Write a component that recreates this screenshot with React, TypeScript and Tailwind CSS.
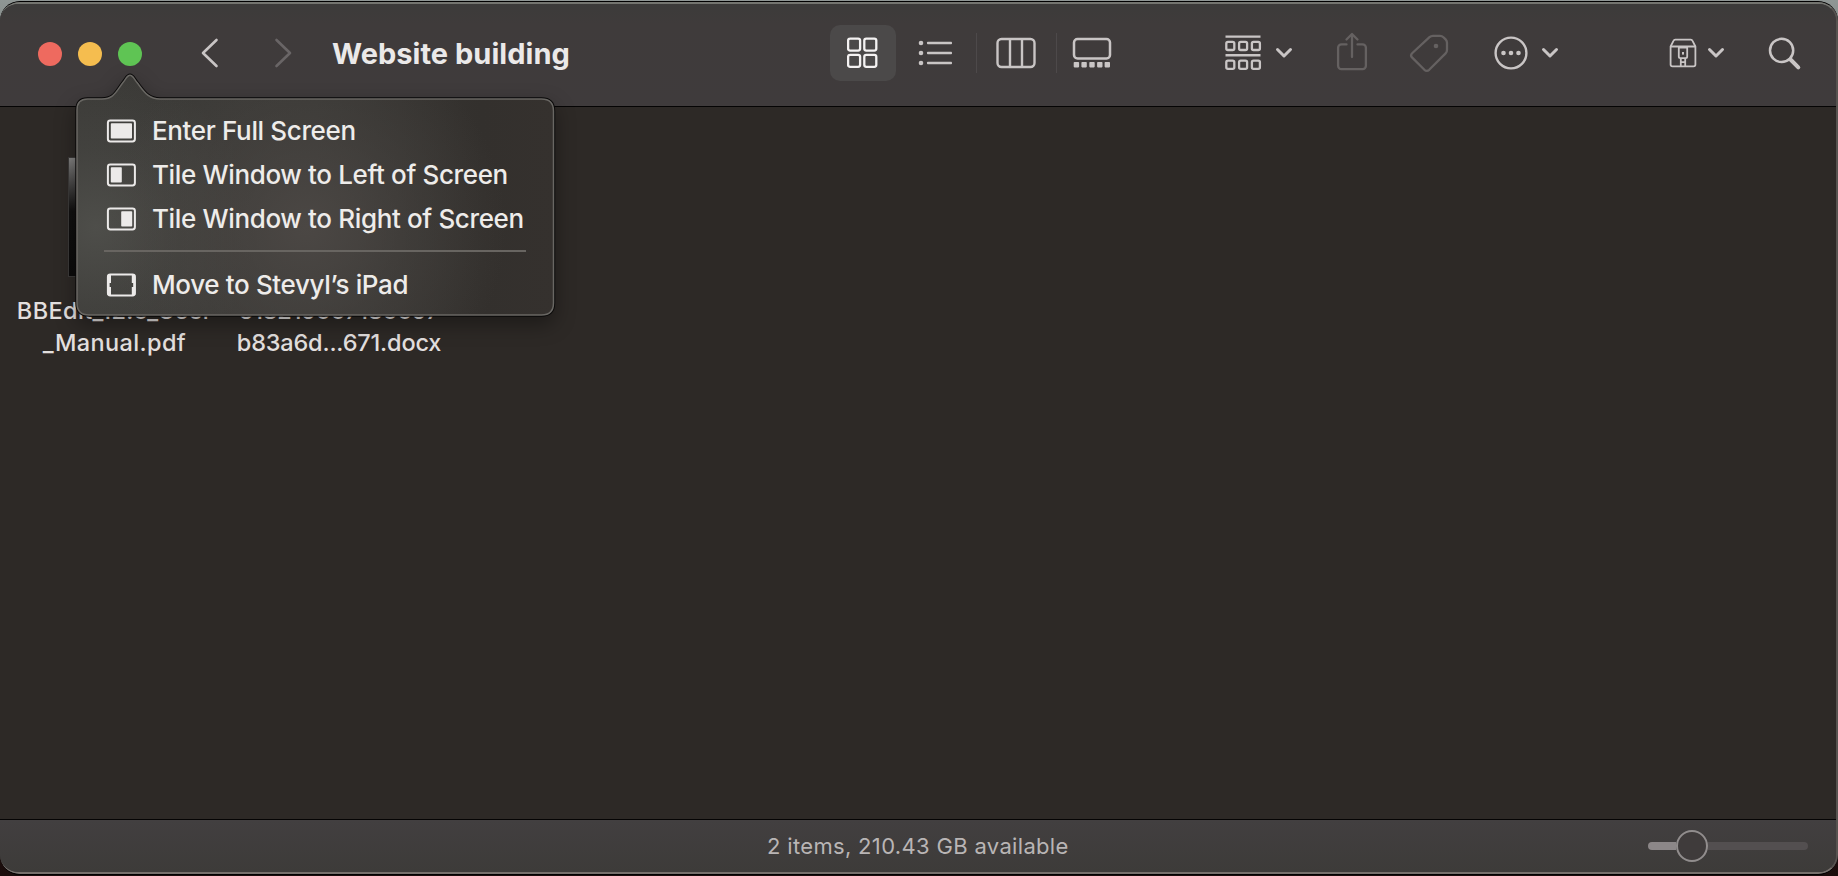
import type { ReactNode } from "react";

const tone = "#c9c5c5";

function Chevron() {
  return (
    <svg width="18" height="12" viewBox="0 0 18 12" fill="none" stroke={tone} strokeWidth="3" strokeLinecap="round" strokeLinejoin="round">
      <path d="M2.5 2.5 L9 9 L15.5 2.5" />
    </svg>
  );
}

function GridIcon() {
  return (
    <svg width="32" height="32" viewBox="0 0 32 32" fill="none" stroke="#f4f2f2" strokeWidth="2.3">
      <rect x="1.1" y="1.6" width="12" height="12" rx="2" />
      <rect x="17.3" y="1.6" width="12" height="12" rx="2" />
      <rect x="1.1" y="17.8" width="12" height="12" rx="2" />
      <rect x="17.3" y="17.8" width="12" height="12" rx="2" />
    </svg>
  );
}

function ListIcon() {
  return (
    <svg width="34" height="26" viewBox="0 0 34 26" fill={tone}>
      {[3, 13, 23].map((y) => (
        <g key={y}>
          <circle cx="3" cy={y} r="2.3" />
          <rect x="9" y={y - 1.3} width="25" height="2.6" rx="0.8" />
        </g>
      ))}
    </svg>
  );
}

function ColumnsIcon() {
  return (
    <svg width="40" height="32" viewBox="0 0 40 32" fill="none" stroke={tone} strokeWidth="2.4">
      <rect x="1.5" y="2" width="37" height="28" rx="4" />
      <path d="M14 2V30M26 2V30" />
    </svg>
  );
}

function GalleryIcon() {
  return (
    <svg width="40" height="32" viewBox="0 0 40 32">
      <rect x="2" y="2" width="36" height="19.5" rx="3.5" fill="none" stroke={tone} strokeWidth="2.5" />
      {[1.7, 9.4, 17.3, 25.1, 32.6].map((x) => (
        <rect key={x} x={x} y="25" width="5.4" height="5.4" rx="0.8" fill={tone} />
      ))}
    </svg>
  );
}

function GroupIcon() {
  return (
    <svg width="38" height="38" viewBox="0 0 38 38" fill="none" stroke={tone} strokeWidth="2.3">
      <path d="M1.5 2.6H36.5M1.5 21.2H36.5" strokeWidth="2.4" />
      {[2.3, 15.1, 27.9].map((x) => (
        <g key={x}>
          <rect x={x} y="7.8" width="8" height="8.2" rx="1.6" />
          <rect x={x} y="26.6" width="8" height="8.2" rx="1.6" />
        </g>
      ))}
    </svg>
  );
}

function ShareIcon() {
  return (
    <svg width="32" height="40" viewBox="0 0 32 40" fill="none" stroke="#656161" strokeWidth="2.3" strokeLinecap="round" strokeLinejoin="round">
      <path d="M10.5 12.4H5.5a3.4 3.4 0 0 0-3.4 3.4V33.8a3.4 3.4 0 0 0 3.4 3.4H26.5a3.4 3.4 0 0 0 3.4-3.4V15.8a3.4 3.4 0 0 0-3.4-3.4H21.5" />
      <path d="M16 25V3M10.5 7.5L16 2L21.5 7.5" />
    </svg>
  );
}

function TagIcon() {
  return (
    <svg width="40" height="40" viewBox="0 0 40 40" fill="none" stroke="#656161" strokeWidth="2.3" strokeLinejoin="round">
      <path d="M20.5 4.2Q22 2.8 24 2.8H31Q33 2.8 34.4 4.2L36.6 6.4Q38 7.8 38 9.8V17Q38 19 36.6 20.4L20.2 36.8Q17.8 39 15.4 36.8L3 24.4Q1 22.2 3.4 20Z" />
      <circle cx="27" cy="13" r="2.3" fill="#656161" stroke="none" />
    </svg>
  );
}

function MoreIcon() {
  return (
    <svg width="34" height="34" viewBox="0 0 34 34" fill={tone}>
      <circle cx="17" cy="17" r="15.4" fill="none" stroke={tone} strokeWidth="2.4" />
      <circle cx="9.5" cy="17" r="2.3" />
      <circle cx="17" cy="17" r="2.3" />
      <circle cx="24.5" cy="17" r="2.3" />
    </svg>
  );
}

function ArchiveIcon() {
  return (
    <svg width="28" height="30" viewBox="0 0 28 30" fill="none" stroke={tone} strokeWidth="1.8" strokeLinejoin="round">
      <path d="M1.6 8.5L4.6 2.6Q5 1.6 6.2 1.6H21.8Q23 1.6 23.4 2.6L26.4 8.5V26.5Q26.4 28.4 24.5 28.4H3.5Q1.6 28.4 1.6 26.5Z" />
      <path d="M1.6 8.5H26.4" />
      <path d="M9.8 9.6H18.2V18.6Q18.2 20.2 16.6 20.2H11.4Q9.8 20.2 9.8 18.6Z" />
      <rect x="13" y="14" width="2" height="2.6" fill={tone} stroke="none" />
      <path d="M11.8 20.5V28M16.2 20.5V28M11.8 24.2H16.2" />
    </svg>
  );
}

function SearchIcon() {
  return (
    <svg width="34" height="34" viewBox="0 0 34 34" fill="none" stroke={tone}>
      <circle cx="13.6" cy="13.4" r="11.6" strokeWidth="2.5" />
      <path d="M22.5 22.5L30.3 30.3" strokeWidth="4" strokeLinecap="round" />
    </svg>
  );
}

function ScreenIcon({ children }: { children: ReactNode }) {
  return (
    <svg width="30" height="24" viewBox="0 0 30 24" fill="#eceae9" className="shrink-0">
      <rect x="1.9" y="1.4" width="27" height="21" rx="2.4" fill="none" stroke="#eceae9" strokeWidth="2" />
      {children}
    </svg>
  );
}

function MenuItem({ icon, label }: { icon: ReactNode; label: string }) {
  return (
    <li className="flex h-11 items-center">
      {icon}
      <span className="ml-4 whitespace-nowrap text-[26px] font-[450] leading-8 tracking-[-0.36px]">{label}</span>
    </li>
  );
}

function ZoomMenu() {
  return (
    <div className="absolute left-[66px] top-[62px] h-[266px] w-[500px] text-[#eeecea]">
      <svg width="500" height="266" viewBox="0 0 500 266" className="absolute left-0 top-0 overflow-visible">
        <defs>
          <radialGradient id="glowLeft" gradientUnits="userSpaceOnUse" cx="30" cy="165" r="160">
            <stop offset="0" stopColor="#50504c" stopOpacity="0.9" />
            <stop offset="0.5" stopColor="#50504c" stopOpacity="0.35" />
            <stop offset="1" stopColor="#50504c" stopOpacity="0" />
          </radialGradient>
          <radialGradient id="glowMid" gradientUnits="userSpaceOnUse" cx="240" cy="165" r="200">
            <stop offset="0" stopColor="#4b4744" />
            <stop offset="0.5" stopColor="#4b4744" stopOpacity="0.45" />
            <stop offset="1" stopColor="#4b4744" stopOpacity="0" />
          </radialGradient>
          <linearGradient id="menuBase" x1="0" y1="0" x2="1" y2="0">
            <stop offset="0" stopColor="#3b3a37" />
            <stop offset="0.5" stopColor="#393835" />
            <stop offset="0.85" stopColor="#33302d" />
            <stop offset="1" stopColor="#35312e" />
          </linearGradient>
          <path id="menuShape" d="M21.5 37H36C48 37 50 29.5 57 20.5C60 17 61 13.3 64 13.3C67 13.3 68 17 71 20.5C78 29.5 82 37 94 37H475.5Q487.5 37 487.5 49V241Q487.5 253 475.5 253H23Q11 253 11 241V48Q11 37 21.5 37Z" />
        </defs>
        <use href="#menuShape" fill="#000" className="[filter:drop-shadow(0_8px_10px_rgba(0,0,0,0.35))]" stroke="#090808" strokeWidth="3.4" />
        <use href="#menuShape" fill="url(#menuBase)" />
        <use href="#menuShape" fill="url(#glowLeft)" />
        <use href="#menuShape" fill="url(#glowMid)" stroke="#696763" strokeWidth="1.5" />
      </svg>
      <ul className="relative flex flex-col pl-10 pt-[47px]">
        <MenuItem label="Enter Full Screen" icon={<ScreenIcon><rect x="4.8" y="4.3" width="21.2" height="15.2" rx="0.8" /></ScreenIcon>} />
        <MenuItem label="Tile Window to Left of Screen" icon={<ScreenIcon><rect x="4.8" y="4.3" width="11" height="15.2" rx="0.8" /></ScreenIcon>} />
        <MenuItem label="Tile Window to Right of Screen" icon={<ScreenIcon><rect x="15.2" y="4.3" width="11" height="15.2" rx="0.8" /></ScreenIcon>} />
        <li className="mb-[11px] ml-[-2px] mt-[9px] h-[2px] w-[422px] bg-[#686561]" />
        <MenuItem label="Move to Stevyl’s iPad" icon={<ScreenIcon><path d="M1.5 2H5V10H3.6V14H5V22H1.5ZM25.8 2H29.3V22H25.8V14H27.2V10H25.8Z" /></ScreenIcon>} />
      </ul>
    </div>
  );
}

function Toolbar() {
  return (
    <header className="flex h-[103px] shrink-0 items-start border-b border-[#050404] bg-linear-to-b from-[#3c3b3a] via-[#3f3b3b] via-20% to-[#3f3b3c] pt-[22px]">
      <div className="ml-[38px] mt-4 flex gap-4">
        <span className="size-6 rounded-full bg-[#ee6a5f]" />
        <span className="size-6 rounded-full bg-[#f5bd4f]" />
        <span className="size-6 rounded-full bg-[#5fc454]" />
      </div>
      <svg className="ml-[57px] mt-[11px]" width="20" height="32" viewBox="0 0 20 32" fill="none" stroke="#c9c5c5" strokeWidth="2.6" strokeLinecap="round" strokeLinejoin="round">
        <path d="M17.5 3L4 16L17.5 29" />
      </svg>
      <svg className="ml-[55px] mt-[11px]" width="20" height="32" viewBox="0 0 20 32" fill="none" stroke="#696566" strokeWidth="2.6" strokeLinecap="round" strokeLinejoin="round">
        <path d="M2.5 3L16 16L2.5 29" />
      </svg>
      <h1 className="ml-[38px] mt-[8px] w-[260px] whitespace-nowrap text-[29px] font-bold leading-10 tracking-[0.03px] text-[#ebe9e9]">Website building</h1>
      <div className="ml-[238px] flex h-[54px] items-center">
        <span className="flex h-14 w-[66px] items-center justify-center rounded-[10px] bg-[#4b4949]"><GridIcon /></span>
        <span className="ml-[22px]"><ListIcon /></span>
        <span className="ml-[24px] h-10 w-px bg-[#4d494a]" />
        <span className="ml-[19px]"><ColumnsIcon /></span>
        <span className="ml-[20px] h-10 w-px bg-[#4d494a]" />
        <span className="ml-[15px]"><GalleryIcon /></span>
      </div>
      <div className="ml-[112px] flex h-[54px] items-center">
        <GroupIcon />
        <span className="ml-[13px]"><Chevron /></span>
      </div>
      <div className="ml-[43px] mt-[6px]"><ShareIcon /></div>
      <div className="ml-[41px] mt-[7px]"><TagIcon /></div>
      <div className="ml-[45px] flex h-[54px] items-center">
        <MoreIcon />
        <span className="ml-[13px]"><Chevron /></span>
      </div>
      <div className="ml-[110px] flex h-[54px] items-center">
        <ArchiveIcon />
        <span className="ml-[10px]"><Chevron /></span>
      </div>
      <div className="ml-[43px] mt-[11px]"><SearchIcon /></div>
    </header>
  );
}

export default function App() {
  return (
    <div className="relative h-[876px] w-[1838px] overflow-hidden bg-linear-to-b from-[#8f9694] via-[#2c2422] via-50% to-[#1b0d0c] font-['Inter','Liberation_Sans',sans-serif]">
      <div className="mt-px flex h-[874px] w-[1838px] flex-col overflow-hidden rounded-[20px] border border-x-0 border-black bg-[#3f3b3b]">
        <div className="flex h-full w-full flex-col overflow-hidden rounded-[19px] border-b-2 border-r-2 border-t-2 border-b-[#76706c] border-r-[#575350] border-t-[#747570]">
          <Toolbar />
          <main className="flex flex-1 items-start bg-[#2d2926] text-center text-[23.5px] leading-8 text-[#e2dfde]">
            <figure className="ml-[14px] mt-[50px] w-[200px]">
              <div className="ml-[54px] h-[120px] w-[94px] border border-[#3c3a39] bg-linear-to-b from-[#858483] via-[#111010] via-45% to-[#0c0b0b]" />
              <figcaption className="mt-[18px] whitespace-nowrap pl-px font-[450] tracking-[0.38px]">BBEdit_12.6_User<br />_Manual.pdf</figcaption>
            </figure>
            <figure className="ml-[22px] mt-[50px] w-[206px]">
              <div className="mx-auto h-[120px] w-[94px] bg-[#6b6765]" />
              <figcaption className="mt-[18px] whitespace-nowrap font-[450] tracking-[-0.18px]">518219667186697<br />b83a6d...671.docx</figcaption>
            </figure>
          </main>
          <footer className="flex h-[53px] shrink-0 items-center border-t border-[#050404] bg-linear-to-b from-[#423f40] to-[#3d3b39]">
            <p className="ml-[767px] w-[320px] whitespace-nowrap text-[22px] leading-7 tracking-[0.33px] text-[#b9b5b5]">2 items, 210.43 GB available</p>
            <div className="ml-[561px] flex items-center">
              <span className="h-2 w-[28px] rounded-l-full bg-[#8c8788]" />
              <span className="size-8 rounded-full border-2 border-[#918d8d] bg-[#3f3b3b]" />
              <span className="h-2 w-[100px] rounded-r-full bg-[#534f50]" />
            </div>
          </footer>
        </div>
      </div>
      <ZoomMenu />
    </div>
  );
}
